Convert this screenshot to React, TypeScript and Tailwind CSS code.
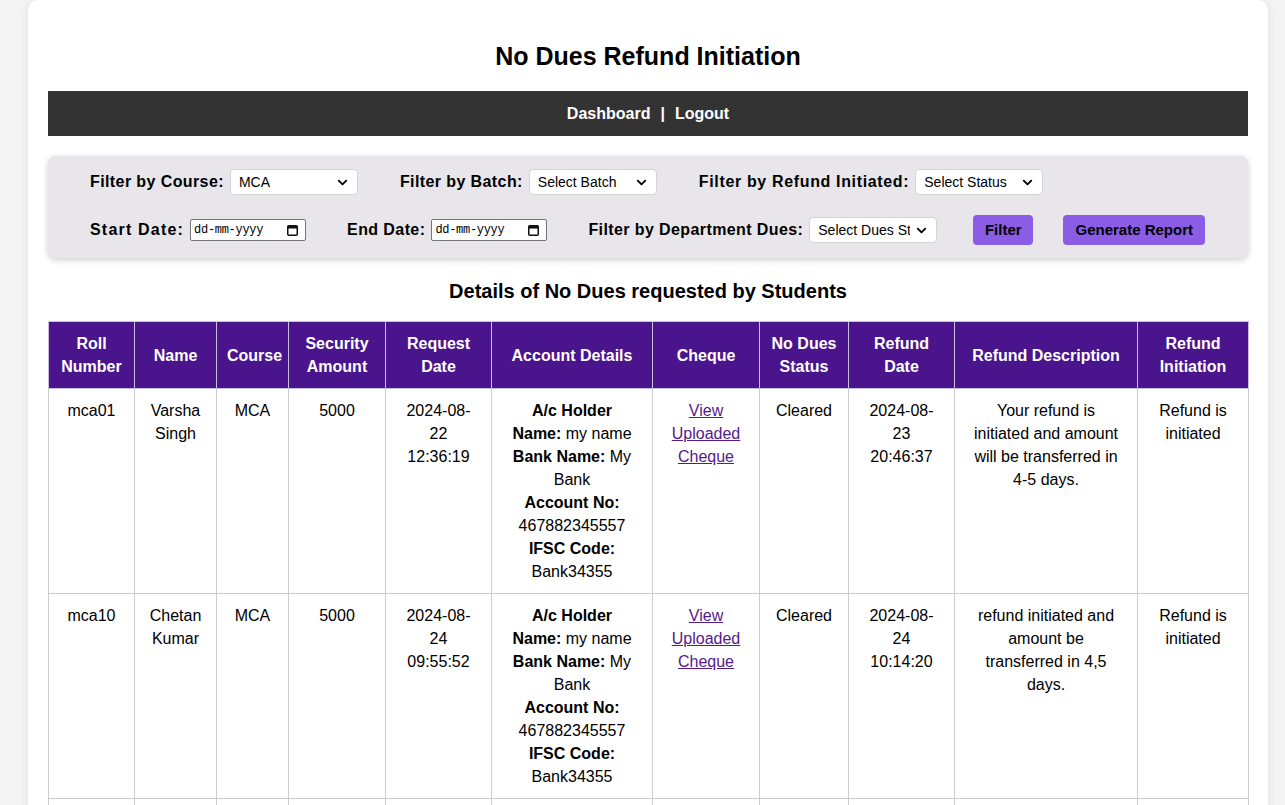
import { ChevronDown } from "lucide-react";
import type { ReactNode } from "react";

type Row = {
  roll: string;
  name: string[];
  course: string;
  amount: string;
  requested: string[];
  status: string;
  refundDate: string[];
  description: string[];
};

const rows: Row[] = [
  {
    roll: "mca01",
    name: ["Varsha", "Singh"],
    course: "MCA",
    amount: "5000",
    requested: ["2024-08-", "22", "12:36:19"],
    status: "Cleared",
    refundDate: ["2024-08-", "23", "20:46:37"],
    description: ["Your refund is", "initiated and amount", "will be transferred in", "4-5 days."],
  },
  {
    roll: "mca10",
    name: ["Chetan", "Kumar"],
    course: "MCA",
    amount: "5000",
    requested: ["2024-08-", "24", "09:55:52"],
    status: "Cleared",
    refundDate: ["2024-08-", "24", "10:14:20"],
    description: ["refund initiated and", "amount be", "transferred in 4,5", "days."],
  },
  {
    roll: "mca12",
    name: ["Rohit", "Verma"],
    course: "MCA",
    amount: "5000",
    requested: ["2024-08-", "25", "11:02:41"],
    status: "Cleared",
    refundDate: ["2024-08-", "26", "09:30:12"],
    description: ["refund initiated and", "amount be", "transferred in 4,5", "days."],
  },
];

const headers: string[][] = [
  ["Roll", "Number"],
  ["Name"],
  ["Course"],
  ["Security", "Amount"],
  ["Request", "Date"],
  ["Account Details"],
  ["Cheque"],
  ["No Dues", "Status"],
  ["Refund", "Date"],
  ["Refund Description"],
  ["Refund", "Initiation"],
];

const colWidths = ["w-[86px]", "w-[82px]", "w-[72px]", "w-[97px]", "w-[106px]", "w-[161px]", "w-[107px]", "w-[89px]", "w-[106px]", "w-[183px]", "w-[111px]"];

function Lines({ lines }: { lines: string[] }) {
  return (
    <>
      {lines.map((l, i) => (
        <span key={i}>
          {l}
          {i < lines.length - 1 && <br />}
        </span>
      ))}
    </>
  );
}

function FakeSelect({ value }: { value: string }) {
  return (
    <div className="flex h-[26px] w-[128px] shrink-0 items-center justify-between rounded-[4px] border border-[#d4d4d4] bg-white pl-2 pr-[7px] font-['Liberation_Sans',Arial,sans-serif] text-[14px] font-normal tracking-normal text-black">
      <span className="overflow-hidden whitespace-nowrap">{value}</span>
      <ChevronDown size={15} strokeWidth={3} className="ml-1 shrink-0" />
    </div>
  );
}

function FakeDate() {
  return (
    <div className="flex h-[22px] w-[116px] shrink-0 items-center justify-between rounded-[2px] border border-[#767676] bg-white pl-[3px] pr-[7px] font-['Liberation_Mono',monospace] text-[12px] font-normal tracking-normal text-black">
      <span className="tracking-[-0.3px]">dd-mm-yyyy</span>
      <svg width="11" height="11" viewBox="0 0 11 11">
        <rect x="0.75" y="0.75" width="9.5" height="9.5" rx="1" fill="none" stroke="#111" strokeWidth="1.5" />
        <rect x="0.75" y="0.75" width="9.5" height="2.8" fill="#111" />
      </svg>
    </div>
  );
}

function Field({ label, wide, children }: { label: string; wide?: string; children: ReactNode }) {
  return (
    <div className="flex shrink-0 items-center gap-[6px]">
      <span className={`whitespace-nowrap text-[16px] font-bold ${wide ?? "tracking-[0.4px]"}`}>{label}</span>
      {children}
    </div>
  );
}

function Th({ children }: { children: ReactNode }) {
  return (
    <th className="border border-[#c9bcdc] bg-[#4a148c] px-[10px] py-[10px] text-center align-middle text-[16px] font-bold leading-[23px] text-white">
      {children}
    </th>
  );
}

function Td({ children }: { children: ReactNode }) {
  return <td className="border border-[#cccccc] px-[10px] py-[10px] text-center align-top text-[16px] leading-[23px] text-black">{children}</td>;
}

export default function App() {
  return (
    <div className="min-h-screen bg-[#f4f4f4] font-['Liberation_Sans',Arial,sans-serif] text-black">
      <div className="ml-[28px] w-[1240px] rounded-[10px] bg-white p-5 shadow-[0_0_10px_rgba(0,0,0,0.1)]">
        <h1 className="mb-[19px] mt-5 text-center text-[25px] font-bold leading-[32px]">No Dues Refund Initiation</h1>

        <nav className="flex h-[45px] items-center justify-center bg-[#333333] text-[16px] font-bold text-white">
          <a href="#">Dashboard</a>
          <span className="mx-[10px]">|</span>
          <a href="#">Logout</a>
        </nav>

        {/* filters */}
        <div className="mt-5 flex flex-col gap-5 rounded-lg bg-[#e8e6ea] px-[42px] py-[13px] shadow-[0_2px_6px_rgba(0,0,0,0.2)]">
          <div className="flex h-[26px] items-center gap-[42px]">
            <Field label="Filter by Course:">
              <FakeSelect value="MCA" />
            </Field>
            <Field label="Filter by Batch:">
              <FakeSelect value="Select Batch" />
            </Field>
            <Field label="Filter by Refund Initiated:" wide="tracking-[0.65px]">
              <FakeSelect value="Select Status" />
            </Field>
          </div>
          <div className="flex h-[30px] items-center">
            <Field label="Start Date:" wide="tracking-[1.2px]">
              <FakeDate />
            </Field>
            <div className="ml-[41px]">
              <Field label="End Date:">
                <FakeDate />
              </Field>
            </div>
            <div className="ml-[41px]">
              <Field label="Filter by Department Dues:">
                <FakeSelect value="Select Dues Status" />
              </Field>
            </div>
            <button className="ml-[36px] h-[30px] w-[60px] shrink-0 rounded-[4px] bg-[#8b5ce6] text-[15px] font-bold text-black">Filter</button>
            <button className="ml-[30px] h-[30px] w-[142px] shrink-0 rounded-[4px] bg-[#8b5ce6] text-[15px] font-bold text-black">Generate Report</button>
          </div>
        </div>

        <h2 className="mb-4 mt-[19px] text-center text-[20px] font-bold leading-[28px]">Details of No Dues requested by Students</h2>

        <table className="w-full table-fixed border-collapse">
          <colgroup>
            {colWidths.map((w, i) => (
              <col key={i} className={w} />
            ))}
          </colgroup>
          <thead>
            <tr>
              {headers.map((h, i) => (
                <Th key={i}>
                  <Lines lines={h} />
                </Th>
              ))}
            </tr>
          </thead>
          <tbody>
            {rows.map((r) => (
              <tr key={r.roll}>
                <Td>{r.roll}</Td>
                <Td>
                  <Lines lines={r.name} />
                </Td>
                <Td>{r.course}</Td>
                <Td>{r.amount}</Td>
                <Td>
                  <Lines lines={r.requested} />
                </Td>
                <Td>
                  <b>A/c Holder</b>
                  <br />
                  <b>Name:</b> my name
                  <br />
                  <b>Bank Name:</b> My
                  <br />
                  Bank
                  <br />
                  <b>Account No:</b>
                  <br />
                  467882345557
                  <br />
                  <b>IFSC Code:</b>
                  <br />
                  Bank34355
                </Td>
                <Td>
                  <a href="#" className="text-[#551a8b] underline">
                    View
                    <br />
                    Uploaded
                    <br />
                    Cheque
                  </a>
                </Td>
                <Td>{r.status}</Td>
                <Td>
                  <Lines lines={r.refundDate} />
                </Td>
                <Td>
                  <Lines lines={r.description} />
                </Td>
                <Td>
                  Refund is
                  <br />
                  initiated
                </Td>
              </tr>
            ))}
          </tbody>
        </table>
      </div>
    </div>
  );
}
